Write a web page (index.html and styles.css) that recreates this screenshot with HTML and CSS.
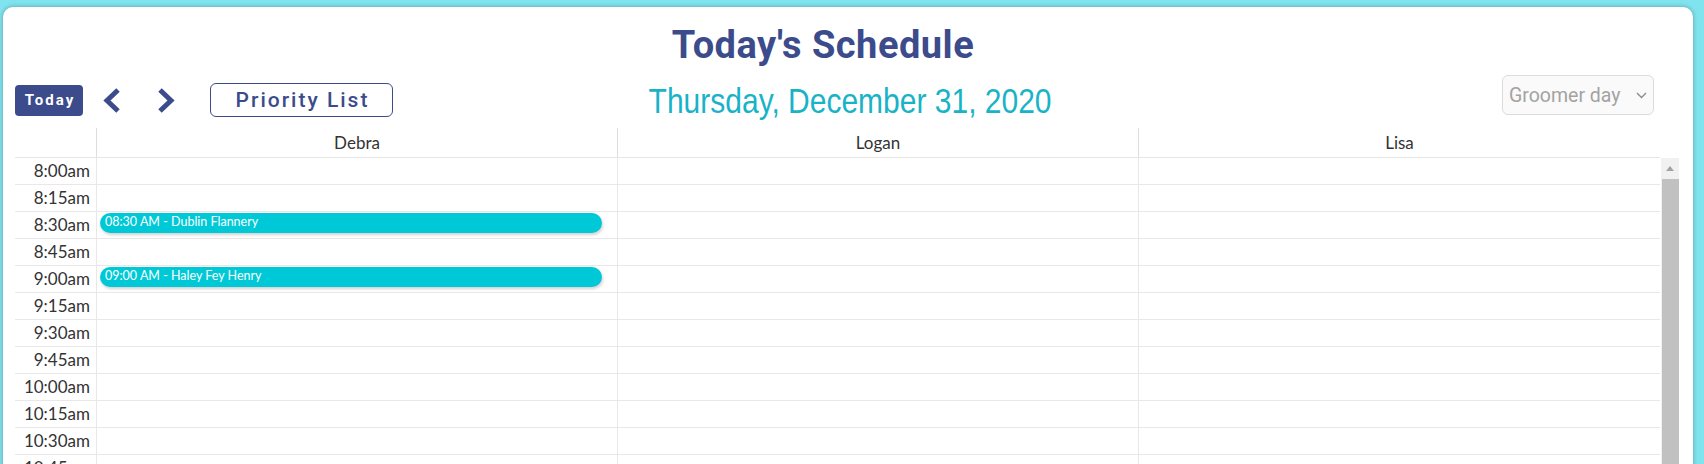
FILE: index.html
```html
<!DOCTYPE html>
<html>
<head>
<meta charset="utf-8">
<title>Today's Schedule</title>
<link rel="stylesheet" href="styles.css">
</head>
<body>
<div class="card">
  <h1 class="title">Today's Schedule</h1>
  <div class="toolbar">
    <div class="tb-left">
      <button class="btn-today">Today</button>
      <span class="chev chev-left">
        <svg width="18" height="25" viewBox="0 0 18 25"><polyline points="16,2 5,12.5 16,23" fill="none" stroke="#3b4b8c" stroke-width="5"/></svg>
      </span>
      <span class="chev chev-right">
        <svg width="18" height="25" viewBox="0 0 18 25"><polyline points="2,2 13,12.5 2,23" fill="none" stroke="#3b4b8c" stroke-width="5"/></svg>
      </span>
      <button class="btn-priority">Priority List</button>
    </div>
    <div class="date"><span class="date-text">Thursday, December 31, 2020</span></div>
    <div class="tb-right">
      <div class="select">
        <span>Groomer day</span>
        <svg class="sel-chev" width="11" height="7" viewBox="0 0 11 7"><polyline points="1,1 5.5,5.5 10,1" fill="none" stroke="#8a8a8a" stroke-width="1.4"/></svg>
      </div>
    </div>
  </div>

  <div class="header">
    <div class="hgrid">
      <div class="hcell"></div>
      <div class="hcell">Debra</div>
      <div class="hcell">Logan</div>
      <div class="hcell">Lisa</div>
    </div>
    <div class="hspacer"></div>
  </div>

  <div class="body">
    <div class="rows">
      <div class="row"><div class="time">8:00am</div><div class="cell"></div><div class="cell"></div><div class="cell"></div></div>
      <div class="row"><div class="time">8:15am</div><div class="cell"></div><div class="cell"></div><div class="cell"></div></div>
      <div class="row"><div class="time">8:30am</div><div class="cell"><div class="event">08:30 AM - Dublin Flannery</div></div><div class="cell"></div><div class="cell"></div></div>
      <div class="row"><div class="time">8:45am</div><div class="cell"></div><div class="cell"></div><div class="cell"></div></div>
      <div class="row"><div class="time">9:00am</div><div class="cell"><div class="event">09:00 AM - Haley Fey Henry</div></div><div class="cell"></div><div class="cell"></div></div>
      <div class="row"><div class="time">9:15am</div><div class="cell"></div><div class="cell"></div><div class="cell"></div></div>
      <div class="row"><div class="time">9:30am</div><div class="cell"></div><div class="cell"></div><div class="cell"></div></div>
      <div class="row"><div class="time">9:45am</div><div class="cell"></div><div class="cell"></div><div class="cell"></div></div>
      <div class="row"><div class="time">10:00am</div><div class="cell"></div><div class="cell"></div><div class="cell"></div></div>
      <div class="row"><div class="time">10:15am</div><div class="cell"></div><div class="cell"></div><div class="cell"></div></div>
      <div class="row"><div class="time">10:30am</div><div class="cell"></div><div class="cell"></div><div class="cell"></div></div>
      <div class="row"><div class="time">10:45am</div><div class="cell"></div><div class="cell"></div><div class="cell"></div></div>
    </div>
    <div class="scrollbar">
      <div class="sb-up"><span class="sb-tri"></span></div>
      <div class="sb-thumb"></div>
    </div>
  </div>
</div>
</body>
</html>
```

FILE: styles.css
```css
html, body {
  margin: 0;
  height: 464px;
  overflow: hidden;
}
body {
  background: #80e4ef;
  padding: 7px 11px 0 3px;
  box-sizing: border-box;
  font-family: Lato, "Noto Sans", sans-serif;
}
.card {
  background: #fff;
  border-radius: 10px 10px 0 0;
  box-shadow: 0 0 5px rgba(0, 0, 0, 0.3);
  padding: 17px 14px 0 12px;
  height: 620px;
  box-sizing: border-box;
}
.title {
  margin: 0;
  text-align: center;
  font: 700 38px/43px Roboto, sans-serif;
  letter-spacing: 0.5px;
  color: #3b4b8c;
  padding-right: 48px;
}
.toolbar {
  display: grid;
  grid-template-columns: 1fr auto 1fr;
  height: 42px;
  margin-top: 8px;
}
.tb-left {
  display: flex;
  align-items: center;
  align-self: end;
  height: 34px;
}
.btn-today {
  width: 68px;
  height: 31px;
  border: 0;
  border-radius: 4px;
  background: #3b4b8c;
  color: #fff;
  font: 700 15px Roboto, sans-serif;
  letter-spacing: 2px;
  padding: 0 0 0 2px;
}
.chev {
  display: flex;
  width: 18px;
  height: 25px;
}
.chev-left { margin-left: 19px; }
.chev-right { margin-left: 38px; }
.btn-priority {
  margin-left: 34px;
  width: 183px;
  height: 34px;
  box-sizing: border-box;
  border: 1px solid #3b4b8c;
  border-radius: 6px;
  background: #fff;
  color: #3b4b8c;
  font: 500 21px Roboto, sans-serif;
  letter-spacing: 2px;
  padding: 0 0 0 2px;
}
.date {
  align-self: end;
  font: 35px/32px "Liberation Sans Narrow", "Liberation Sans", sans-serif;
  color: #19b3c7;
  padding-left: 6px;
}
.date-text {
  display: inline-block;
  transform: scaleX(0.857);
}
.tb-right {
  justify-self: end;
  align-self: start;
  margin-right: 25px;
}
.select {
  width: 152px;
  height: 40px;
  box-sizing: border-box;
  border: 1px solid #dcdcdc;
  border-radius: 6px;
  background: #fafafa;
  display: flex;
  align-items: center;
  padding-left: 6px;
  font: 19.5px Roboto, sans-serif;
  color: #a3a3a3;
}
.sel-chev {
  margin-left: auto;
  margin-right: 6px;
}
.header {
  display: flex;
  margin-top: 11px;
}
.hgrid {
  flex: 1;
  display: grid;
  grid-template-columns: 82px repeat(3, 1fr);
  height: 30px;
  box-sizing: border-box;
  border-bottom: 1px solid #e6e6e6;
}
.hcell {
  border-right: 1px solid #dddddd;
  display: flex;
  align-items: center;
  justify-content: center;
  font: 17px Lato, sans-serif;
  color: #333;
}
.hcell:last-child { border-right: 0; }
.hspacer {
  width: 19px;
}
.body {
  display: flex;
}
.rows {
  flex: 1;
}
.row {
  display: grid;
  grid-template-columns: 82px repeat(3, 1fr);
  height: 27px;
  box-sizing: border-box;
  border-bottom: 1px solid #e8e8e8;
}
.time {
  border-right: 1px solid #e8e8e8;
  text-align: right;
  padding-right: 6px;
  font: 17px/26px Lato, sans-serif;
  color: #333;
}
.cell {
  border-right: 1px solid #e8e8e8;
}
.cell:last-child { border-right: 0; }
.event {
  margin: 1px 15px 0 3px;
  height: 20px;
  border-radius: 10px;
  background: #00c9d7;
  color: #fff;
  font: 12.5px/17px Lato, sans-serif;
  padding-left: 5px;
  box-shadow: 1px 2px 3px rgba(0, 0, 0, 0.18);
  white-space: nowrap;
  overflow: hidden;
}
.scrollbar {
  width: 18px;
  margin-left: 1px;
  background: #f1f1f1;
  display: flex;
  flex-direction: column;
}
.sb-up {
  height: 21px;
  display: flex;
  align-items: center;
  justify-content: center;
}
.sb-tri {
  width: 0;
  height: 0;
  border-left: 4.5px solid transparent;
  border-right: 4.5px solid transparent;
  border-bottom: 5px solid #a3a3a3;
}
.sb-thumb {
  flex: 1;
  margin-left: 1px;
  background: #c1c1c1;
}
```
